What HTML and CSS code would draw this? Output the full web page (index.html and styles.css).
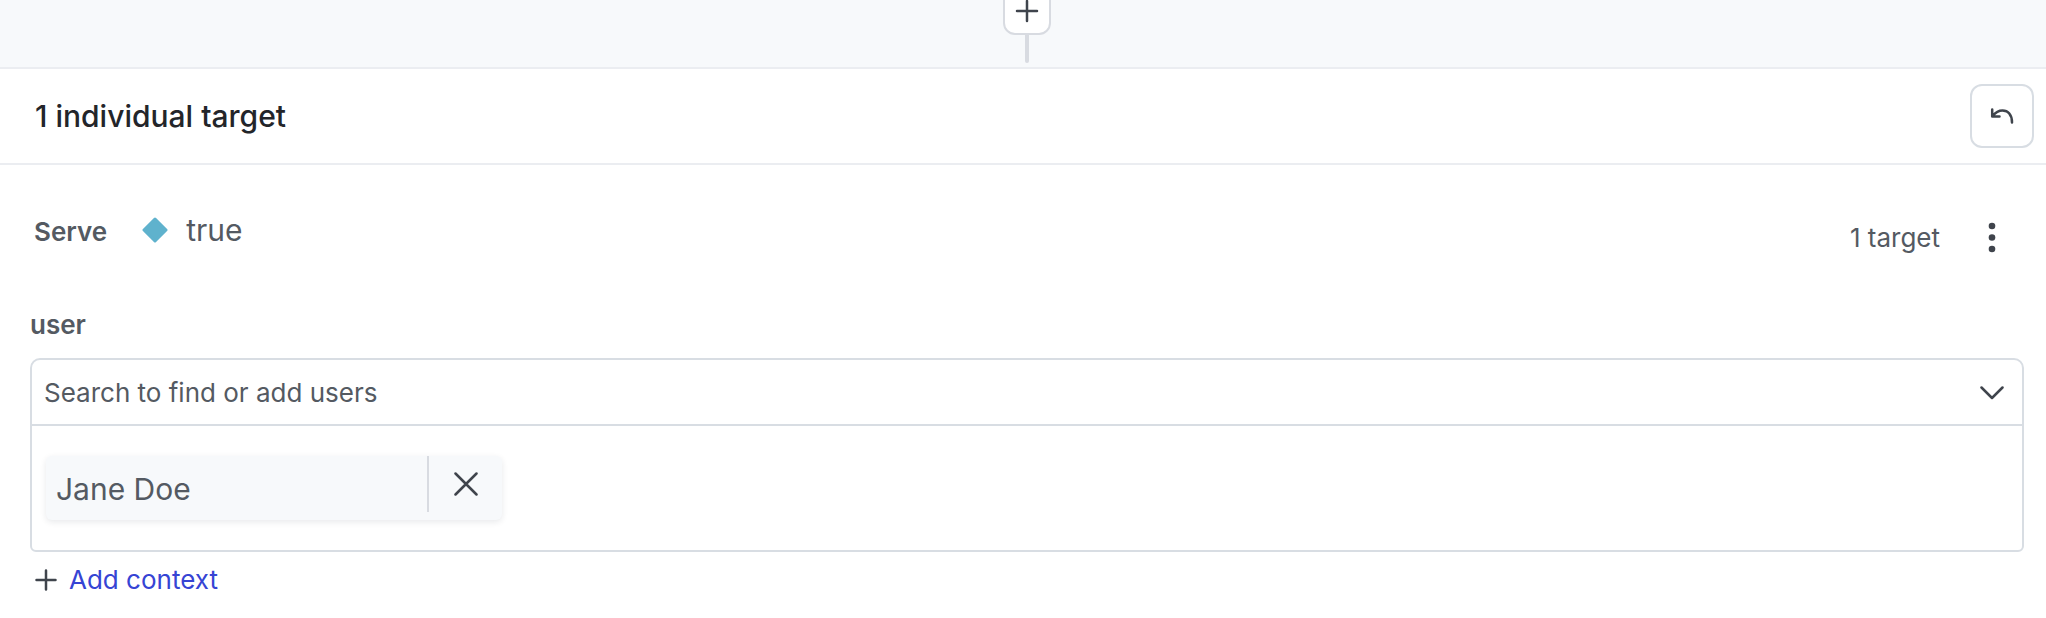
FILE: index.html
```html
<!DOCTYPE html>
<html lang="en">
<head>
<meta charset="utf-8">
<title>Individual targets</title>
<link rel="stylesheet" href="styles.css">
</head>
<body>
<div class="connector">
  <button class="connector-add" type="button" aria-label="Add rule">
    <svg class="icon" viewBox="0 0 24 24"><path d="M12 2v20M2 12h20"/></svg>
  </button>
  <span class="connector-stem"></span>
</div>
<main class="panel">
  <header class="panel-header">
    <h1 class="title">1 individual target</h1>
    <button class="undo" type="button" aria-label="Undo">
      <svg class="icon" viewBox="0 0 24 24"><path d="M2.200 5.500v7H9.500M2.800 12C5.500 8.500 8.500 6.500 12.500 6.500C18 6.500 22 10.500 22 18.500"/></svg>
    </button>
  </header>
  <section class="content">
    <div class="serve-row">
      <div class="serve">
        <span class="label">Serve</span>
        <svg class="diamond" viewBox="0 0 26 26"><path d="M13 2L24 13L13 24L2 13Z"/></svg>
        <span class="variation">true</span>
      </div>
      <div class="summary">
        <span>1 target</span>
        <button class="menu" type="button" aria-label="More options">
          <svg class="dots" viewBox="0 0 8 32"><circle cx="4" cy="4" r="3.300"/><circle cx="4" cy="15.500" r="3.300"/><circle cx="4" cy="27" r="3.300"/></svg>
        </button>
      </div>
    </div>
    <label class="label user-label" for="user-search">user</label>
    <div class="box">
      <div class="search">
        <input class="search-input" id="user-search" type="text" placeholder="Search to find or add users">
        <button class="toggle" type="button" aria-label="Show users">
          <svg class="icon" viewBox="0 0 24 24"><path d="M1.500 7.500L12 18L22.500 7.500"/></svg>
        </button>
      </div>
      <div class="targets">
        <div class="chip">
          <span class="chip-name">Jane Doe</span>
          <button class="chip-remove" type="button" aria-label="Remove Jane Doe">
            <svg class="icon" viewBox="0 0 24 24"><path d="M1.500 1.500l21 21M22.500 1.500l-21 21"/></svg>
          </button>
        </div>
      </div>
    </div>
    <button class="add-context" type="button">
      <svg class="icon" viewBox="0 0 24 24"><path d="M12 2.500v19M2.500 12h19"/></svg>
      <span>Add context</span>
    </button>
  </section>
</main>
</body>
</html>
```
FILE: styles.css
```css
* {
  box-sizing: border-box;
}

body {
  margin: 0;
  background: #fff;
  color: #545a62;
  font-family: Inter, "Liberation Sans", sans-serif;
  font-size: 26px;
  line-height: 32px;
}

button {
  display: flex;
  align-items: center;
  justify-content: center;
  margin: 0;
  padding: 0;
  border: 0;
  background: none;
  color: inherit;
  font: inherit;
}

.icon {
  flex: none;
  width: 24px;
  height: 24px;
  fill: none;
  stroke: #3f444c;
  stroke-width: 2.5;
  stroke-linecap: round;
  stroke-linejoin: round;
}

.connector {
  display: flex;
  flex-direction: column;
  align-items: center;
  height: 67px;
  padding-left: 8px;
  background: #f7f9fb;
}

.connector-add {
  flex: none;
  width: 48px;
  height: 48px;
  margin-top: -13px;
  border: 2px solid #d8dbe1;
  border-radius: 12px;
  background: #fff;
}

.connector-stem {
  width: 4px;
  height: 28px;
  border-radius: 0 0 2px 2px;
  background: #d8dbe1;
}

.panel-header {
  display: flex;
  align-items: center;
  justify-content: space-between;
  padding: 15px 12px 15px 35px;
  border-top: 2px solid #ebedf1;
  border-bottom: 2px solid #ebedf1;
}

.title {
  margin: 0;
  color: #23252a;
  font-size: 30px;
  font-weight: 500;
  line-height: 36px;
}

.undo {
  width: 64px;
  height: 64px;
  border: 2px solid #d8dde3;
  border-radius: 12px;
}

.content {
  padding: 46px 22px 16px 30px;
}

.serve-row {
  display: flex;
  justify-content: space-between;
}

.serve {
  display: flex;
  align-items: baseline;
  height: 38px;
  padding: 3px 0 0 4px;
}

.label {
  font-weight: 600;
}

.diamond {
  align-self: flex-start;
  width: 26px;
  height: 26px;
  margin: 3px 18px 0 35px;
  fill: #5fb2cd;
  stroke: #5fb2cd;
  stroke-width: 3;
  stroke-linejoin: round;
}

.variation {
  font-size: 30px;
}

.summary {
  display: flex;
  align-items: center;
  gap: 28px;
  padding: 11px 8px 0 0;
}

.menu {
  width: 48px;
  height: 32px;
}

.dots {
  width: 8px;
  height: 32px;
  fill: #3f444c;
}

.user-label {
  display: block;
  margin: 55px 0 17px;
}

.box {
  border: 2px solid #d8dde3;
  border-radius: 10px 10px 6px 6px;
}

.search {
  display: flex;
  align-items: center;
  height: 66px;
  padding: 0 18px 0 12px;
  border-bottom: 2px solid #d8dde3;
}

.search-input {
  flex: 1;
  min-width: 0;
  height: 48px;
  padding: 0;
  border: 0;
  outline: 0;
  background: none;
  color: #545a62;
  font: inherit;
}

.search-input::placeholder {
  color: #545a62;
  opacity: 1;
}

.targets {
  padding: 30px 14px;
}

.chip {
  display: flex;
  align-items: flex-start;
  width: 456px;
  height: 64px;
  border-radius: 6px;
  background: #f7f9fb;
  box-shadow: 0 2px 6px rgba(30, 40, 60, 0.1);
}

.chip-name {
  flex: 1;
  padding: 14px 10px;
  font-size: 30px;
  line-height: 38px;
}

.chip-remove {
  width: 75px;
  height: 56px;
  border-left: 2px solid #d8dbe1;
}

.add-context {
  gap: 11px;
  margin-top: 12px;
  padding-left: 4px;
  color: #3644d4;
}
```
